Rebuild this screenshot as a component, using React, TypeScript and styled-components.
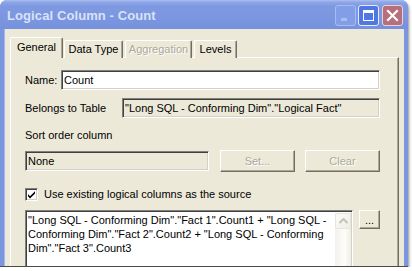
import React from "react";
import styled, { createGlobalStyle } from "styled-components";

const GlobalStyle = createGlobalStyle`
	body {
		margin: 0;
		background-color: #ffffff;
		font-family: "Liberation Sans", Arial, sans-serif;
		font-size: 11px;
		color: #000000;
	}
`;

const sourceLines = [
	`"Long SQL - Conforming Dim"."Fact 1".Count1 + "Long SQL -`,
	`Conforming Dim"."Fact 2".Count2 + "Long SQL - Conforming`,
	`Dim"."Fact 3".Count3`,
];

const App = () => {
	return (
		<>
			<GlobalStyle />
			<Window>
				<TitleBar>
					<Title>Logical Column - Count</Title>
					<CaptionButton kind='min'>
						<svg width='19' height='19' viewBox='0 0 19 19'>
							<rect x='5' y='12' width='6' height='3' fill='#aabdf0' />
						</svg>
					</CaptionButton>
					<CaptionButton kind='max'>
						<svg width='19' height='19' viewBox='0 0 19 19'>
							<rect x='4.5' y='4.5' width='10' height='10' fill='none' stroke='#ffffff' strokeWidth='1' />
							<rect x='4' y='4' width='11' height='3' fill='#ffffff' />
						</svg>
					</CaptionButton>
					<CaptionButton kind='close'>
						<svg width='19' height='19' viewBox='0 0 19 19'>
							<path d='M5 5 L14 14 M14 5 L5 14' stroke='#ffffff' strokeWidth='2.2' strokeLinecap='square' />
						</svg>
					</CaptionButton>
				</TitleBar>

				<Body>
					<Tabs>
						<Tab active w={53}>General</Tab>
						<Tab w={59}>Data Type</Tab>
						<Tab w={67} disabled>Aggregation</Tab>
						<Tab w={43}>Levels</Tab>
					</Tabs>

					<Panel>
						<Row mt={0}>
							<Label w={36}>Name:</Label>
							<Field w={319}>Count</Field>
						</Row>

						<Row mt={8}>
							<Label w={97}>Belongs to Table</Label>
							<Field w={258} readOnly>
								"Long SQL - Conforming Dim"."Logical Fact"
							</Field>
						</Row>

						<Caption>Sort order column</Caption>

						<Row mt={8}>
							<Field w={184} readOnly>None</Field>
							<Button w={75} ml={11} disabled>Set...</Button>
							<Button w={75} ml={10} disabled>Clear</Button>
						</Row>

						<CheckRow>
							<CheckBox>
								<svg width='9' height='9' viewBox='0 0 9 9'>
									<path d='M1 4 L3 6.2 L8 1.2 L8 3.4 L3 8.4 L1 6.2 Z' fill='#000000' />
								</svg>
							</CheckBox>
							<span>Use existing logical columns as the source</span>
						</CheckRow>

						<SourceRow>
							<SourceBox>
								<SourceText>
									{sourceLines.map((line) => (
										<div key={line}>{line}</div>
									))}
								</SourceText>
								<ScrollBar>
									<ScrollButton>
										<svg width='9' height='6' viewBox='0 0 9 6'>
											<path d='M0.5 5 L4.5 1 L8.5 5' fill='none' stroke='#c5c3b9' strokeWidth='2' />
										</svg>
									</ScrollButton>
								</ScrollBar>
							</SourceBox>
							<Button w={21} h={19} ml={6}>...</Button>
						</SourceRow>
					</Panel>
				</Body>
			</Window>
		</>
	);
};

export default App;

const Window = styled.div`
	width: 408px;
	height: 267px;
	box-sizing: border-box;
	display: flex;
	flex-direction: column;
	background-color: #7c95e0;
	border-radius: 7px 7px 0 0;
	border-bottom: 1px solid #4a4a4a;
	box-shadow: 1px 2px 3px rgba(0, 0, 0, 0.45);
	overflow: hidden;
`;

const TitleBar = styled.div`
	height: 29px;
	flex-shrink: 0;
	display: flex;
	align-items: center;
	gap: 2px;
	padding: 1px 5px 0 7px;
	box-sizing: border-box;
	background: linear-gradient(#aebff0 0px, #8fa7e7 2px, #7f99e1 6px, #7b96e0 20px, #7591dd 29px);
`;

const Title = styled.div`
	flex: 1;
	font-family: "Liberation Sans", Arial, sans-serif;
	font-weight: 700;
	font-size: 13px;
	color: #d9e2f8;
	letter-spacing: 0.1px;
`;

const CaptionButton = styled.div<{ kind: "min" | "max" | "close" }>`
	width: 21px;
	height: 21px;
	box-sizing: border-box;
	border-radius: 3px;
	display: flex;
	align-items: center;
	justify-content: center;
	margin-left: ${(props) => (props.kind === "close" ? "1px" : "0")};
	border: 1px solid
		${(props) =>
			props.kind === "min" ? "#a9bcf0" : props.kind === "max" ? "#e6ecfb" : "#e6d3d8"};
	background-color: ${(props) =>
		props.kind === "min" ? "#819ee6" : props.kind === "max" ? "#4f78e4" : "#b66f7b"};
`;

const Body = styled.div`
	flex: 1;
	display: flex;
	flex-direction: column;
	margin: 0 4px;
	padding: 8px 5px 0 6px;
	background-color: #ece9d8;
	box-shadow: inset 1px 0 #a5b6ec;
`;

const Tabs = styled.div`
	height: 21px;
	display: flex;
	align-items: flex-end;
	gap: 1px;
	margin-bottom: -1px;
	position: relative;
	z-index: 1;
`;

const Tab = styled.div<{ w: number; active?: boolean; disabled?: boolean }>`
	width: ${(props) => props.w}px;
	height: ${(props) => (props.active ? 21 : 18)}px;
	box-sizing: border-box;
	display: flex;
	align-items: center;
	justify-content: center;
	padding-bottom: ${(props) => (props.active ? 3 : 1)}px;
	margin-right: ${(props) => (props.active ? 0 : 1)}px;
	background-color: #ece9d8;
	border-top: 1px solid #ffffff;
	border-left: 1px solid #ffffff;
	border-right: 1px solid #716f64;
	box-shadow: inset -1px 0 #aca899;
	border-radius: 2px 2px 0 0;
	color: ${(props) => (props.disabled ? "#aca899" : "#000000")};
	text-shadow: ${(props) => (props.disabled ? "1px 1px #ffffff" : "none")};
`;

const Panel = styled.div`
	flex: 1;
	display: flex;
	flex-direction: column;
	padding: 12px 0 0 14px;
	border-top: 1px solid #ffffff;
	border-left: 1px solid #ffffff;
	border-right: 1px solid #716f64;
	box-shadow: inset -1px 0 #aca899;
`;

const Row = styled.div<{ mt: number }>`
	display: flex;
	align-items: center;
	margin-top: ${(props) => props.mt}px;
`;

const Label = styled.div<{ w: number }>`
	width: ${(props) => props.w}px;
	flex-shrink: 0;
`;

const Field = styled.div<{ w: number; readOnly?: boolean }>`
	width: ${(props) => props.w}px;
	height: 20px;
	box-sizing: border-box;
	display: flex;
	align-items: center;
	padding: 0 2px;
	white-space: nowrap;
	overflow: hidden;
	background-color: ${(props) => (props.readOnly ? "#ece9d8" : "#ffffff")};
	border-top: 1px solid #808080;
	border-left: 1px solid #808080;
	border-right: 1px solid #ffffff;
	border-bottom: 1px solid #ffffff;
	box-shadow: inset 1px 1px #404040, inset -1px -1px #d4d0c8;
`;

const Caption = styled.div`
	margin-top: 10px;
	line-height: 14px;
`;

const Button = styled.div<{ w: number; h?: number; ml: number; disabled?: boolean }>`
	width: ${(props) => props.w}px;
	height: ${(props) => props.h || 22}px;
	margin-left: ${(props) => props.ml}px;
	align-self: flex-start;
	box-sizing: border-box;
	display: flex;
	align-items: center;
	justify-content: center;
	background-color: #ece9d8;
	border-top: 1px solid #ffffff;
	border-left: 1px solid #ffffff;
	border-right: 1px solid #716f64;
	border-bottom: 1px solid #716f64;
	box-shadow: inset -1px -1px #aca899;
	color: ${(props) => (props.disabled ? "#aca899" : "#000000")};
	text-shadow: ${(props) => (props.disabled ? "1px 1px #ffffff" : "none")};
`;

const CheckRow = styled.div`
	display: flex;
	align-items: center;
	gap: 6px;
	margin-top: 15px;
	height: 14px;
`;

const CheckBox = styled.div`
	width: 13px;
	height: 13px;
	box-sizing: border-box;
	display: flex;
	align-items: center;
	justify-content: center;
	background-color: #ffffff;
	border-top: 1px solid #808080;
	border-left: 1px solid #808080;
	border-right: 1px solid #ffffff;
	border-bottom: 1px solid #ffffff;
	box-shadow: inset 1px 1px #404040, inset -1px -1px #d4d0c8;
`;

const SourceRow = styled.div`
	display: flex;
	margin-top: 9px;
`;

const SourceBox = styled.div`
	width: 328px;
	height: 70px;
	box-sizing: border-box;
	display: flex;
	background-color: #ffffff;
	border-top: 1px solid #808080;
	border-left: 1px solid #808080;
	border-right: 1px solid #ffffff;
	box-shadow: inset 1px 1px #404040, inset -1px 0 #d4d0c8;
	padding: 2px 1px 0 2px;
`;

const SourceText = styled.div`
	flex: 1;
	line-height: 14px;
	white-space: nowrap;
	padding-left: 0px;
`;

const ScrollBar = styled.div`
	width: 16px;
	display: flex;
	flex-direction: column;
	background: linear-gradient(90deg, #f3f1ec, #fdfdfa 60%, #f0eee6);
`;

const ScrollButton = styled.div`
	height: 16px;
	box-sizing: border-box;
	display: flex;
	align-items: center;
	justify-content: center;
	border: 1px solid #e8e6dc;
	border-radius: 2px;
	background: linear-gradient(135deg, #fbfbf8, #eeede5);
`;
